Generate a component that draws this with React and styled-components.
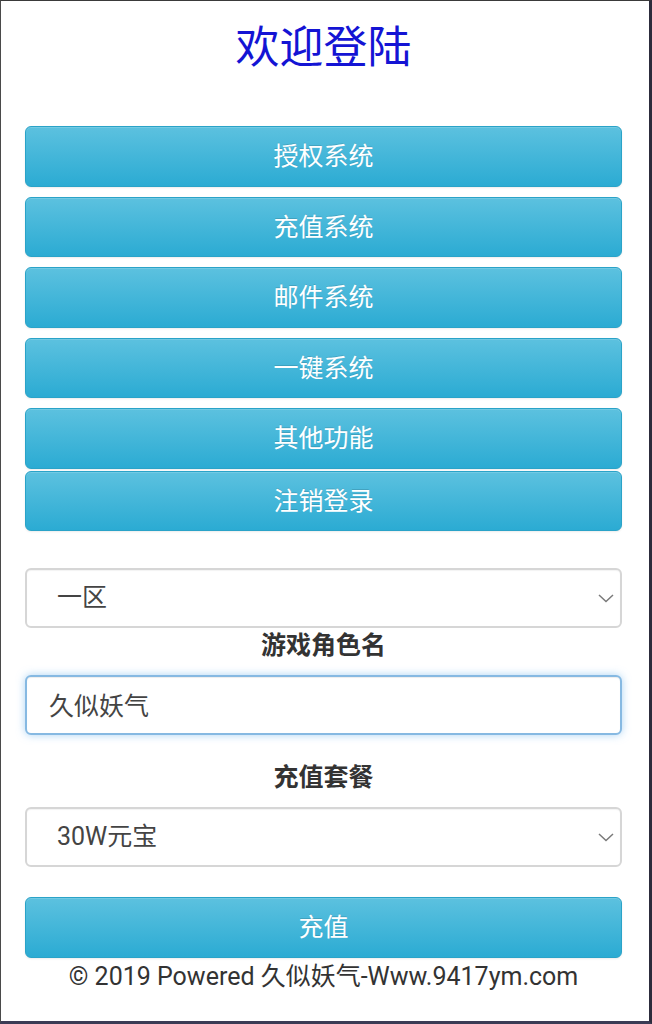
import React from "react";
import styled, { createGlobalStyle } from "styled-components";

const GlobalStyle = createGlobalStyle`
    html, body {
        margin: 0;
        padding: 0;
        background: #ffffff;
    }
    * {
        box-sizing: border-box;
    }
`

const Frame = styled.div
`
    width: 652px;
    height: 1024px;
    overflow: hidden;
    background: #ffffff;
    border-top: 1px solid #3a3a3a;
    border-left: 1px solid #4a4a4a;
    border-right: 3px solid #2c2c3c;
    border-bottom: 3px solid #3b3b55;
    padding: 24px 27px 0 24px;
    font-family: Roboto, "Noto Sans CJK SC", sans-serif;
    display: flex;
    flex-direction: column;
`

const Title = styled.h1
`
    margin: 0;
    height: 46px;
    line-height: 46px;
    text-align: center;
    font-size: 44px;
    font-weight: normal;
    color: #1414d4;
`

const Menu = styled.nav
`
    margin-top: 55px;
    display: flex;
    flex-direction: column;
    gap: 10px;
`

const Button = styled.button
`
    width: 100%;
    height: 60.5px;
    flex-shrink: 0;
    margin-top: ${props => props.$gap || 0}px;
    border: 1px solid #2aa3c8;
    border-radius: 6px;
    background-image: linear-gradient(to bottom, #5cc1df 0%, #2babd3 100%);
    box-shadow: inset 0 1px 0 rgba(255, 255, 255, 0.15), 0 1px 2px rgba(0, 0, 0, 0.08);
    color: #ffffff;
    text-shadow: 0 -1px 0 rgba(0, 0, 0, 0.12);
    font-family: Roboto, "Noto Sans CJK SC", sans-serif;
    font-size: 25px;
    padding: 0 0 4px 0;
    cursor: pointer;
`

const SelectBox = styled.div
`
    position: relative;
    flex-shrink: 0;
    margin-top: ${props => props.$gap || 0}px;
`

const Select = styled.select
`
    appearance: none;
    -webkit-appearance: none;
    width: 100%;
    height: 60px;
    border: 2px solid #d6d6d6;
    border-radius: 6px;
    background: #ffffff;
    box-shadow: inset 0 1px 1px rgba(0, 0, 0, 0.05);
    color: #444;
    font-family: Roboto, "Noto Sans CJK SC", sans-serif;
    font-size: 25px;
    padding: 0 40px 2px 30px;
    outline: none;
`

const Chevron = styled.svg
`
    position: absolute;
    right: 8px;
    top: 50%;
    margin-top: -4px;
    pointer-events: none;
`

const Label = styled.div
`
    margin-top: ${props => props.$gap || 0}px;
    height: 34px;
    line-height: 34px;
    text-align: center;
    font-size: 25px;
    font-weight: bold;
    color: #333;
`

const Input = styled.input
`
    width: 100%;
    height: 60px;
    flex-shrink: 0;
    margin-top: 12px;
    border: 2px solid #86b9e2;
    border-radius: 6px;
    background: #ffffff;
    box-shadow: inset 0 1px 1px rgba(0, 0, 0, 0.075), 0 0 8px rgba(102, 175, 233, 0.55);
    color: #444;
    font-family: Roboto, "Noto Sans CJK SC", sans-serif;
    font-size: 25px;
    padding: 0 22px 2px 22px;
    outline: none;
    caret-color: #333;
`

const Footer = styled.div
`
    margin-top: 4px;
    text-align: center;
    font-size: 25px;
    line-height: 30px;
    color: #333;
    white-space: nowrap;
`

function ChevronIcon()
{
    return (
        <Chevron width = "16" height = "9" viewBox = "0 0 16 9">
            <path d = "M1 1 L8 7.5 L15 1" fill = "none" stroke = "#7a7a7a" strokeWidth = "1.5"/>
        </Chevron>
    )
}

function Dropdown({ gap, options })
{
    return (
        <SelectBox $gap = {gap}>
            <Select defaultValue = {options[0]}>
                {options.map((opt) => (
                    <option key = {opt} value = {opt}>{opt}</option>
                ))}
            </Select>
            <ChevronIcon/>
        </SelectBox>
    )
}

const menu = ["授权系统", "充值系统", "邮件系统", "一键系统", "其他功能"];

export default function App()
{
    return (
        <Frame>
            <GlobalStyle/>
            <Title>欢迎登陆</Title>

            {/* 功能菜单 */}
            <Menu>
                {menu.map((item) => (
                    <Button key = {item}>{item}</Button>
                ))}
            </Menu>
            <Button $gap = {2}>注销登录</Button>

            {/* 充值表单 */}
            <Dropdown gap = {37} options = {["一区", "二区", "三区"]}/>
            <Label $gap = {1}>游戏角色名</Label>
            <Input defaultValue = "久似妖气" autoFocus/>
            <Label $gap = {26}>充值套餐</Label>
            <Dropdown gap = {12} options = {["30W元宝", "50W元宝", "100W元宝"]}/>
            <Button $gap = {30}>充值</Button>
            <Footer>© 2019 Powered 久似妖气-Www.9417ym.com</Footer>
        </Frame>
    )
}
